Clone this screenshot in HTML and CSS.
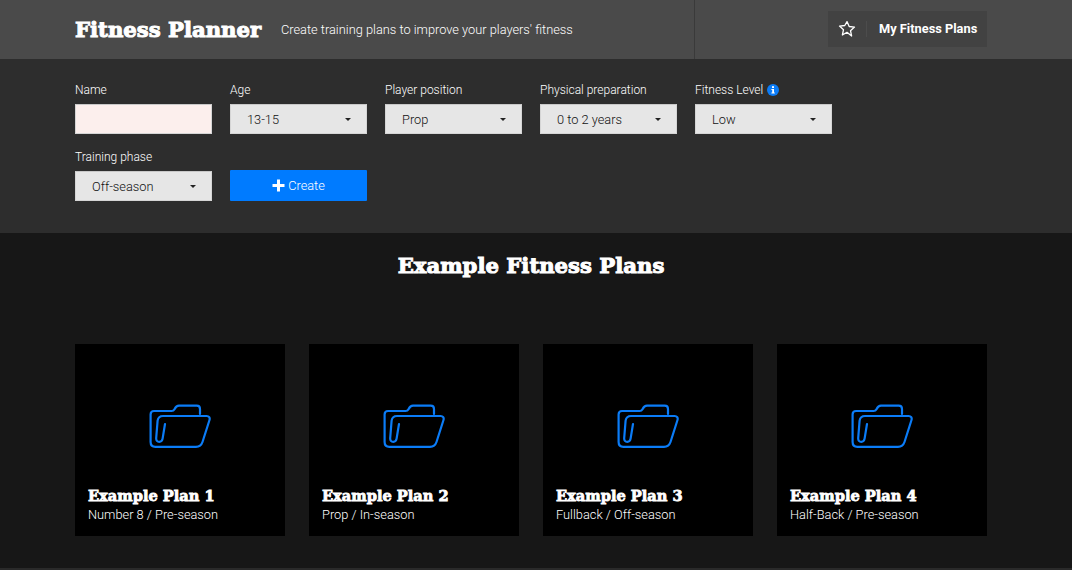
FILE: index.html
```html
<!DOCTYPE html>
<html lang="en">
<head>
  <meta charset="UTF-8">
  <title>Fitness Planner</title>
  <link rel="stylesheet" href="styles.css">
</head>
<body>
  <header class="top">
    <div class="brand">
      <h1>Fitness Planner</h1>
      <p>Create training plans to improve your players' fitness</p>
    </div>
    <div class="topRight">
      <a class="myPlans" href="#">
        <span class="starBox">
          <svg width="18" height="18" viewBox="0 0 18 18"><path d="M9 1.6l2.2 4.9 5.3.6-4 3.6 1.1 5.3L9 12.3l-4.6 2.700 1.100-5.300-4-3.600 5.300-.6z" fill="none" stroke="#fff" stroke-width="1.3" stroke-linejoin="round"/></svg>
        </span>
        <span class="myPlansText">My Fitness Plans</span>
      </a>
    </div>
  </header>

  <section class="formArea">
    <form class="planForm">
      <div class="field">
        <label for="name">Name</label>
        <input id="name" class="nameInput" type="text">
      </div>
      <div class="field">
        <label>Age</label>
        <div class="select"><span>13-15</span><i class="caret"></i></div>
      </div>
      <div class="field">
        <label>Player position</label>
        <div class="select"><span>Prop</span><i class="caret"></i></div>
      </div>
      <div class="field">
        <label>Physical preparation</label>
        <div class="select"><span>0 to 2 years</span><i class="caret"></i></div>
      </div>
      <div class="field">
        <label>Fitness Level
          <svg class="info" width="12" height="12" viewBox="0 0 12 12"><circle cx="6" cy="6" r="6" fill="#0b7cf7"/><rect x="5" y="2.2" width="2" height="1.8" fill="#fff"/><path d="M4.400 5H7v3.600h.8v1H4.400v-1h.8V6h-.8z" fill="#fff"/></svg>
        </label>
        <div class="select"><span>Low</span><i class="caret"></i></div>
      </div>
      <div class="field">
        <label>Training phase</label>
        <div class="select"><span>Off-season</span><i class="caret"></i></div>
      </div>
      <div class="field fieldBtn">
        <button class="createBtn" type="button">
          <svg width="13" height="13" viewBox="0 0 13 13"><path d="M5 .5h3V5h4.500v3H8v4.500H5V8H.5V5H5z" fill="#fff"/></svg>
          Create
        </button>
      </div>
    </form>
  </section>

  <main class="examples">
    <h2>Example Fitness Plans</h2>
    <div class="cards">
      <a class="card" href="#">
        <span class="cardIcon">
          <svg width="62" height="44" viewBox="0 0 62 44"><use href="#folder"/></svg>
        </span>
        <h3>Example Plan 1</h3>
        <p>Number 8 / Pre-season</p>
      </a>
      <a class="card" href="#">
        <span class="cardIcon">
          <svg width="62" height="44" viewBox="0 0 62 44"><use href="#folder"/></svg>
        </span>
        <h3>Example Plan 2</h3>
        <p>Prop / In-season</p>
      </a>
      <a class="card" href="#">
        <span class="cardIcon">
          <svg width="62" height="44" viewBox="0 0 62 44"><use href="#folder"/></svg>
        </span>
        <h3>Example Plan 3</h3>
        <p>Fullback / Off-season</p>
      </a>
      <a class="card" href="#">
        <span class="cardIcon">
          <svg width="62" height="44" viewBox="0 0 62 44"><use href="#folder"/></svg>
        </span>
        <h3>Example Plan 4</h3>
        <p>Half-Back / Pre-season</p>
      </a>
    </div>
  </main>

  <svg class="defs" width="0" height="0">
    <symbol id="folder" viewBox="0 0 62 44">
      <path d="M51 10V5c0-2-1.300-3.300-3.300-3.300H30c-2.500 0-3.500 1.500-4.500 3.500-.6 1.200-1.500 1.800-3 1.800H5c-2.200 0-3.400 1.300-3.400 3.500V38c0 3 1.800 4.800 4.800 4.800H47c3.500 0 5.500-1.800 6.500-4.800l7-22c.7-2.300-.6-4-2.800-4H14c-3 0-5 1.800-5.400 4.700L7.200 34c-.2 2.500 1.100 3.900 3.100 3.900 1.900 0 3-1.300 3.300-3.200L16 20" fill="none" stroke="#0b7cf7" stroke-width="2.200" stroke-linecap="round" stroke-linejoin="round"/>
    </symbol>
  </svg>
</body>
</html>
```

FILE: styles.css
```css
*{
  margin: 0;
  padding: 0;
  box-sizing: border-box;
}
a{
  text-decoration: none;
  color: #fff;
}
body{
  background: #171717;
  color: #fff;
  font-family: Roboto, "Liberation Sans", sans-serif;
  font-size: 12.8px;
  height: 570px;
  overflow: hidden;
  border-bottom: 2px solid #2a2a2a;
}

/* top bar */
.top{
  height: 59px;
  background: #4a4a4a;
  display: flex;
}
.brand{
  width: 694px;
  padding-left: 75px;
  display: flex;
  align-items: center;
}
.brand h1{
  font-family: "DejaVu Serif", serif;
  font-weight: 700;
  font-size: 21.2px;
  -webkit-text-stroke: 1px #fff;
  width: 206px;
  white-space: nowrap;
}
.brand p{
  font-size: 12.8px;
  font-weight: 300;
}
.topRight{
  flex: 1;
  border-left: 1px solid #3a3a3a;
  padding: 11px 85px 0 0;
  display: flex;
  justify-content: flex-end;
  align-items: flex-start;
}
.myPlans{
  height: 36px;
  width: 159px;
  background: #424242;
  display: flex;
  align-items: center;
}
.starBox{
  width: 39px;
  height: 16px;
  border-right: 1px solid #4c4c4c;
  display: flex;
  align-items: center;
  justify-content: center;
}
.myPlansText{
  margin-left: 12px;
  padding-bottom: 2px;
  font-weight: 700;
  font-size: 12.8px;
  white-space: nowrap;
}

/* form */
.formArea{
  height: 174px;
  background: #2d2d2d;
  padding: 23px 75px 0;
}
.planForm{
  display: grid;
  grid-template-columns: repeat(5, 137px);
  gap: 15px 18px;
}
.field label{
  display: flex;
  align-items: center;
  gap: 4px;
  height: 15px;
  margin-bottom: 7px;
  font-size: 12px;
  font-weight: 300;
  white-space: nowrap;
}
.nameInput,
.select{
  display: block;
  width: 137px;
  height: 30px;
  border: 1px solid #d5d5d5;
  border-top-color: #c8c8c8;
}
.nameInput{
  background: #fcefed;
}
.select{
  background: #e6e6e6;
  color: #111;
  font-size: 12.8px;
  font-weight: 300;
  padding: 0 16px;
  display: flex;
  align-items: center;
  justify-content: space-between;
}
.caret{
  width: 0;
  height: 0;
  border-left: 3px solid transparent;
  border-right: 3px solid transparent;
  border-top: 3px solid #222;
  margin-right: -1px;
}
.fieldBtn{
  padding-top: 21px;
}
.createBtn{
  width: 137px;
  height: 31px;
  background: #007bff;
  border: 0;
  border-radius: 1px;
  color: #fff;
  font-family: Roboto, "Liberation Sans", sans-serif;
  font-size: 12.8px;
  font-weight: 300;
  display: flex;
  align-items: center;
  justify-content: center;
  gap: 3px;
}

/* examples */
.examples{
  padding: 0 85px 0 75px;
}
.examples h2{
  font-family: "DejaVu Serif", serif;
  font-weight: 700;
  font-size: 21.2px;
  -webkit-text-stroke: 1px #fff;
  text-align: center;
  height: 111px;
  padding-top: 20px;
}
.cards{
  display: grid;
  grid-template-columns: repeat(4, 210px);
  gap: 24px;
}
.card{
  height: 192px;
  background: #000;
  padding: 0 13px;
  display: flex;
  flex-direction: column;
}
.cardIcon{
  display: flex;
  justify-content: center;
  padding-top: 60px;
  height: 142px;
}
.card h3{
  font-family: "DejaVu Serif", serif;
  font-weight: 700;
  font-size: 14.6px;
  -webkit-text-stroke: 0.8px #fff;
  line-height: 20px;
  white-space: nowrap;
}
.card p{
  font-size: 12.8px;
  font-weight: 300;
  line-height: 15px;
  margin-top: 1px;
}
.defs{
  position: absolute;
}
```
